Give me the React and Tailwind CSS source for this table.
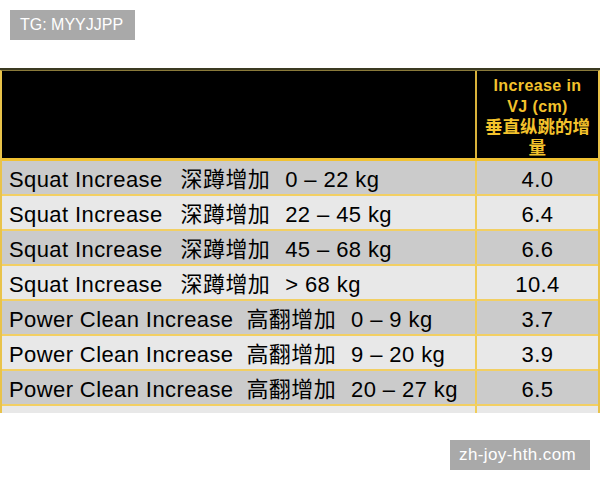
const rows = [
  { en: "Squat Increase", zh: "深蹲增加", range: "0 – 22 kg", vj: "4.0" },
  { en: "Squat Increase", zh: "深蹲增加", range: "22 – 45 kg", vj: "6.4" },
  { en: "Squat Increase", zh: "深蹲增加", range: "45 – 68 kg", vj: "6.6" },
  { en: "Squat Increase", zh: "深蹲增加", range: "> 68 kg", vj: "10.4" },
  { en: "Power Clean Increase", zh: "高翻增加", range: "0 – 9 kg", vj: "3.7" },
  { en: "Power Clean Increase", zh: "高翻增加", range: "9 – 20 kg", vj: "3.9" },
  { en: "Power Clean Increase", zh: "高翻增加", range: "20 – 27 kg", vj: "6.5" },
  { en: "", zh: "", range: "", vj: "" },
];

const font = { fontFamily: '"Liberation Sans", Arial, "Noto Sans CJK SC", sans-serif' };

export default function App() {
  return (
    <div className="relative w-[600px] h-[480px] bg-white overflow-hidden" style={font}>
      {/* watermark top-left */}
      <div className="ml-[10px] mt-[10px] w-[125px] h-[30px] bg-[#a9a9a9] text-white text-[16px] leading-[30px] pl-[10px]">
        TG: MYYJJPP
      </div>

      <div className="mt-[28px] h-[345px] overflow-hidden border-t-2 border-t-[#3b3a22]">
        <div className="border-l-2 border-r-2 border-[#e9c34a] border-t border-t-[#8a7a3a]">
          {/* header */}
          <div className="flex h-[90px] bg-black border-b-[3px] border-[#f1c232]">
            <div className="w-[475px] border-r-2 border-[#d9b13a]" />
            <div className="flex-1 flex flex-col items-center justify-center pt-[4px] text-[#f3c22c] font-bold text-[16px] leading-[21px] tracking-[0.4px] text-center">
              <span>Increase in</span>
              <span>VJ (cm)</span>
              <span className="text-[17.5px] tracking-normal">垂直纵跳的增</span>
              <span className="text-[17.5px]">量</span>
            </div>
          </div>

          {rows.map((r, i) => (
            <div
              key={i}
              className={`flex h-[35px] border-b-2 border-[#f2cf63] text-black text-[22px] tracking-[0.4px] ${
                i % 2 === 0 ? "bg-[#cbcbcb]" : "bg-[#e8e8e8]"
              }`}
            >
              <div className="w-[475px] border-r-2 border-[#f0cd5a] pl-[7px] pt-[3px] flex items-center whitespace-nowrap">
                <span>{r.en}</span>
                <span className={r.en.startsWith("Squat") ? "ml-[18px]" : "ml-[13px]"}>{r.zh}</span>
                <span className="ml-[15px]">{r.range}</span>
              </div>
              <div className="flex-1 flex items-center justify-center pt-[3px]">{r.vj}</div>
            </div>
          ))}
        </div>
      </div>

      {/* watermark bottom-right */}
      <div className="absolute left-[450px] top-[440px] w-[140px] h-[30px] bg-[#a9a9a9] text-white text-[17px] tracking-[0.4px] leading-[30px] pl-[9px]">
        zh-joy-hth.com
      </div>
    </div>
  );
}
